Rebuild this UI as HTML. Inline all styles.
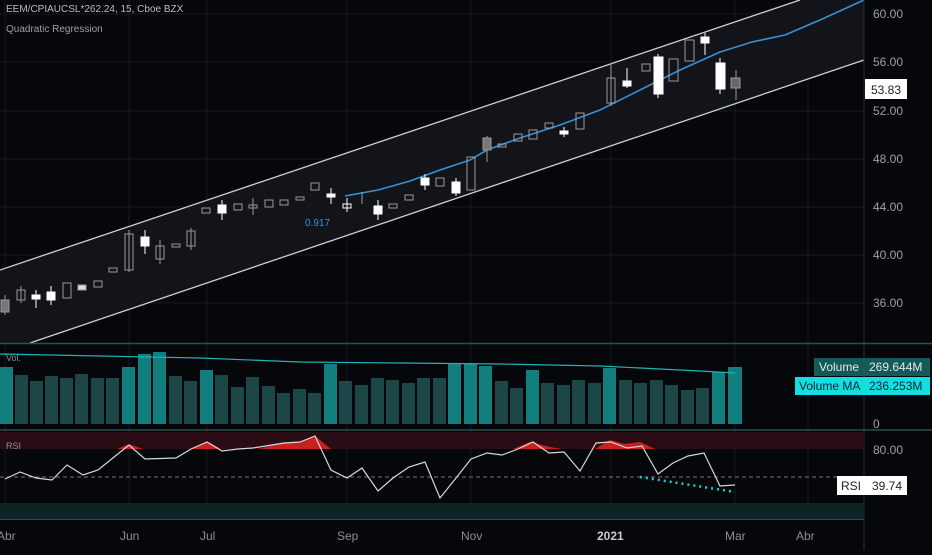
<!DOCTYPE html>
<html><head><style>
body{margin:0;background:#06070b;width:932px;height:550px;overflow:hidden;font-family:"Liberation Sans",sans-serif}
svg text{font-family:"Liberation Sans",sans-serif}
</style></head><body>
<svg width="932" height="550" xmlns="http://www.w3.org/2000/svg">
<rect width="932" height="550" fill="#06070b"/>
<g stroke="#141820" stroke-width="1">
<line x1="0" y1="14" x2="864" y2="14"/><line x1="0" y1="62" x2="864" y2="62"/><line x1="0" y1="111" x2="864" y2="111"/><line x1="0" y1="159" x2="864" y2="159"/><line x1="0" y1="207" x2="864" y2="207"/><line x1="0" y1="255" x2="864" y2="255"/><line x1="0" y1="303" x2="864" y2="303"/>
<line x1="5" y1="0" x2="5" y2="519"/><line x1="129" y1="0" x2="129" y2="519"/><line x1="207" y1="0" x2="207" y2="519"/><line x1="347" y1="0" x2="347" y2="519"/><line x1="471" y1="0" x2="471" y2="519"/><line x1="611" y1="0" x2="611" y2="519"/><line x1="735" y1="0" x2="735" y2="519"/><line x1="808" y1="0" x2="808" y2="519"/>
</g>
<polygon points="0,270 800,0 864,0 864,60 30,343 0,343" fill="#121419"/>
<line x1="0" y1="270" x2="800" y2="0" stroke="#d0d0d0" stroke-width="1.3"/>
<line x1="30" y1="343" x2="864" y2="60" stroke="#d0d0d0" stroke-width="1.3"/>
<polyline points="345,196 378,190 410,181 440,170 470,160 487,150 520,138 560,125 600,110 640,90 680,70 720,52 752,42 785,35 820,20 864,0" fill="none" stroke="#3a8fd6" stroke-width="1.6"/>
<text x="305" y="226" fill="#3a8fd6" font-size="10">0.917</text>
<g stroke="#9a9a9a" stroke-width="1">
<line x1="5" y1="295" x2="5" y2="315"/><rect x="1" y="300" width="8" height="12" fill="#777"/>
<line x1="21" y1="286" x2="21" y2="303"/><rect x="17" y="290" width="8" height="10" fill="none"/>
<line x1="36" y1="290" x2="36" y2="308" stroke="#fff"/><rect x="32" y="295" width="8" height="4" fill="#fff" stroke="#fff"/>
<line x1="51" y1="286" x2="51" y2="305" stroke="#fff"/><rect x="47" y="292" width="8" height="8" fill="#fff" stroke="#fff"/>
<rect x="63" y="283" width="8" height="15" fill="none"/>
<rect x="78" y="285" width="8" height="5" fill="#ddd"/>
<rect x="94" y="281" width="8" height="6" fill="none"/>
<rect x="109" y="268" width="8" height="4" fill="none"/>
<line x1="129" y1="230" x2="129" y2="272"/><rect x="125" y="234" width="8" height="36" fill="none"/>
<rect x="141" y="237" width="8" height="9" fill="#fff" stroke="#fff"/><line x1="145" y1="230" x2="145" y2="254" stroke="#fff"/>
<line x1="160" y1="240" x2="160" y2="264"/><rect x="156" y="246" width="8" height="13" fill="none"/>
<rect x="172" y="244" width="8" height="3" fill="none"/>
<line x1="191" y1="228" x2="191" y2="250"/><rect x="187" y="231" width="8" height="15" fill="none"/>
<rect x="202" y="208" width="8" height="5" fill="none"/>
<line x1="222" y1="200" x2="222" y2="220" stroke="#fff"/><rect x="218" y="205" width="8" height="8" fill="#fff" stroke="#fff"/>
<rect x="234" y="204" width="8" height="6" fill="none"/>
<rect x="249" y="205" width="8" height="3" fill="none"/><line x1="253" y1="198" x2="253" y2="215"/>
<rect x="265" y="200" width="8" height="7" fill="none"/>
<rect x="280" y="200" width="8" height="5" fill="none"/>
<rect x="296" y="197" width="8" height="3" fill="none"/>
<rect x="311" y="183" width="8" height="7" fill="none"/>
<line x1="331" y1="188" x2="331" y2="204" stroke="#fff"/><rect x="327" y="194" width="8" height="3" fill="#fff" stroke="#fff"/>
<line x1="347" y1="198" x2="347" y2="212" stroke="#fff"/><rect x="343" y="204" width="8" height="4" fill="none" stroke="#fff"/>
<line x1="362" y1="192" x2="362" y2="204"/>
<line x1="378" y1="200" x2="378" y2="220" stroke="#fff"/><rect x="374" y="206" width="8" height="8" fill="#fff" stroke="#fff"/>
<rect x="389" y="204" width="8" height="4" fill="none"/>
<rect x="405" y="195" width="8" height="5" fill="none"/>
<line x1="425" y1="174" x2="425" y2="190" stroke="#fff"/><rect x="421" y="178" width="8" height="7" fill="#fff" stroke="#fff"/>
<rect x="436" y="178" width="8" height="8" fill="none"/>
<line x1="456" y1="178" x2="456" y2="196" stroke="#fff"/><rect x="452" y="182" width="8" height="11" fill="#fff" stroke="#fff"/>
<rect x="467" y="157" width="8" height="33" fill="none"/>
<line x1="487" y1="136" x2="487" y2="162"/><rect x="483" y="138" width="8" height="12" fill="#777"/>
<rect x="498" y="144" width="8" height="3" fill="none"/>
<rect x="514" y="134" width="8" height="7" fill="none"/>
<rect x="529" y="130" width="8" height="9" fill="none"/>
<rect x="545" y="123" width="8" height="5" fill="none"/>
<line x1="564" y1="127" x2="564" y2="137" stroke="#fff"/><rect x="560" y="131" width="8" height="3" fill="#fff" stroke="#fff"/>
<rect x="576" y="113" width="8" height="16" fill="none"/>
<line x1="611" y1="63" x2="611" y2="106"/><rect x="607" y="78" width="8" height="25" fill="none"/>
<line x1="627" y1="68" x2="627" y2="88" stroke="#fff"/><rect x="623" y="81" width="8" height="5" fill="#fff" stroke="#fff"/>
<rect x="642" y="64" width="8" height="7" fill="none"/>
<line x1="658" y1="54" x2="658" y2="98" stroke="#fff"/><rect x="654" y="57" width="9" height="37" fill="#fff" stroke="#fff"/>
<rect x="669" y="59" width="9" height="22" fill="none"/>
<rect x="685" y="40" width="9" height="21" fill="none"/>
<line x1="705" y1="33" x2="705" y2="55" stroke="#fff"/><rect x="701" y="37" width="8" height="6" fill="#fff" stroke="#fff"/>
<line x1="720" y1="58" x2="720" y2="94" stroke="#fff"/><rect x="716" y="63" width="9" height="26" fill="#fff" stroke="#fff"/>
<line x1="736" y1="70" x2="736" y2="100"/><rect x="731" y="78" width="9" height="10" fill="#666"/>
</g>
<text x="6" y="12" fill="#b8bcc4" font-size="10">EEM/CPIAUCSL*262.24, 15, Cboe BZX</text>
<text x="6" y="32" fill="#9aa0a8" font-size="10">Quadratic Regression</text>
<line x1="864" y1="0" x2="864" y2="550" stroke="#2a2e36"/>
<g fill="#9aa0a8" font-size="12">
<text x="873" y="18">60.00</text><text x="873" y="66">56.00</text><text x="873" y="115">52.00</text><text x="873" y="163">48.00</text><text x="873" y="211">44.00</text><text x="873" y="259">40.00</text><text x="873" y="307">36.00</text>
</g>
<rect x="865" y="79" width="42" height="20" fill="#fff"/><text x="871" y="94" fill="#222" font-size="12">53.83</text>
<line x1="0" y1="343.5" x2="932" y2="343.5" stroke="#2c4e4e" stroke-width="1.5"/>
<line x1="0" y1="430" x2="932" y2="430" stroke="#2c4e4e" stroke-width="1.5"/>
<g fill="#1d4646">
<rect x="0" y="367" width="13" height="57" fill="#137e7e"/>
<rect x="15" y="375" width="13" height="49"/><rect x="30" y="381" width="13" height="43"/><rect x="45" y="376" width="13" height="48"/><rect x="60" y="378" width="13" height="46"/><rect x="75" y="374" width="13" height="50"/><rect x="91" y="378" width="13" height="46"/><rect x="106" y="378" width="13" height="46"/>
<rect x="122" y="367" width="13" height="57" fill="#137e7e"/><rect x="138" y="354" width="13" height="70" fill="#137e7e"/><rect x="153" y="352" width="13" height="72" fill="#137e7e"/>
<rect x="169" y="376" width="13" height="48"/><rect x="184" y="381" width="13" height="43"/>
<rect x="200" y="370" width="13" height="54" fill="#137e7e"/>
<rect x="215" y="375" width="13" height="49"/><rect x="231" y="387" width="13" height="37"/><rect x="246" y="377" width="13" height="47"/><rect x="262" y="386" width="13" height="38"/><rect x="277" y="393" width="13" height="31"/><rect x="293" y="389" width="13" height="35"/><rect x="308" y="393" width="13" height="31"/>
<rect x="324" y="364" width="13" height="60" fill="#137e7e"/>
<rect x="339" y="381" width="13" height="43"/><rect x="355" y="385" width="13" height="39"/><rect x="371" y="378" width="13" height="46"/><rect x="386" y="380" width="13" height="44"/><rect x="402" y="383" width="13" height="41"/><rect x="417" y="378" width="13" height="46"/><rect x="433" y="378" width="13" height="46"/>
<rect x="448" y="364" width="13" height="60" fill="#137e7e"/><rect x="464" y="364" width="13" height="60" fill="#137e7e"/><rect x="479" y="366" width="13" height="58" fill="#137e7e"/>
<rect x="495" y="381" width="13" height="43"/><rect x="510" y="388" width="13" height="36"/>
<rect x="526" y="370" width="13" height="54" fill="#137e7e"/>
<rect x="541" y="383" width="13" height="41"/><rect x="557" y="385" width="13" height="39"/><rect x="572" y="380" width="13" height="44"/><rect x="588" y="383" width="13" height="41"/>
<rect x="603" y="368" width="13" height="56" fill="#137e7e"/>
<rect x="619" y="380" width="13" height="44"/><rect x="634" y="383" width="13" height="41"/><rect x="650" y="380" width="13" height="44"/><rect x="665" y="385" width="13" height="39"/><rect x="681" y="390" width="13" height="34"/><rect x="696" y="388" width="13" height="36"/>
<rect x="712" y="372" width="13" height="52" fill="#137e7e"/><rect x="728" y="367" width="14" height="57" fill="#137e7e"/>
</g>
<polyline points="0,354 100,356 200,358 300,362 400,363 500,364 600,366 700,371 735,373" fill="none" stroke="#1fb5b5" stroke-width="1.2"/>
<text x="6" y="361" fill="#8a9096" font-size="9">Vol.</text>
<rect x="814" y="358" width="50" height="18" fill="#145a5a"/><text x="819" y="371" fill="#e6e6e6" font-size="12">Volume</text>
<rect x="864" y="358" width="66" height="18" fill="#145a5a"/><text x="869" y="371" fill="#e6e6e6" font-size="12">269.644M</text>
<rect x="795" y="377" width="69" height="18" fill="#11e0e0"/><text x="799" y="390" fill="#123" font-size="12">Volume MA</text>
<rect x="864" y="377" width="66" height="18" fill="#11e0e0"/><text x="869" y="390" fill="#123" font-size="12">236.253M</text>
<text x="873" y="428" fill="#9aa0a8" font-size="12">0</text>
<rect x="0" y="432" width="864" height="17" fill="#2a0c14"/>
<rect x="0" y="503" width="864" height="16" fill="#0c2424"/>
<line x1="0" y1="477" x2="864" y2="477" stroke="#777" stroke-dasharray="4,3"/>
<g fill="#c8201f">
<polygon points="117,449 129,444 143,449"/><polygon points="193,449 207,441 221,449"/><polygon points="258,449 282,443 300,442 315,436 331,449"/>
<polygon points="513,449 530,442 550,447 562,449"/><polygon points="595,449 610,440 625,444 640,442 655,449"/>
</g>
<polyline points="5,479 20,472 36,478 52,480 67,465 83,475 98,470 129,445 145,459 176,458 191,449 207,442 222,451 238,449 253,448 284,443 300,442 315,436 331,470 347,478 362,468 378,491 393,478 409,467 425,462 440,498 456,478 471,459 487,453 502,455 518,449 533,442 549,453 564,452 580,471 596,443 611,442 627,448 642,446 658,474 673,463 688,456 704,453 720,486 735,485" fill="none" stroke="#d8d8d8" stroke-width="1.2"/>
<line x1="640" y1="477" x2="735" y2="492" stroke="#1ccfd0" stroke-width="2.5" stroke-dasharray="2,4"/>
<text x="6" y="449" fill="#8a9096" font-size="9">RSI</text>
<text x="873" y="454" fill="#9aa0a8" font-size="12">80.00</text>
<rect x="837" y="476" width="27" height="19" fill="#fff"/><text x="841" y="490" fill="#222" font-size="12">RSI</text>
<rect x="864" y="476" width="43" height="19" fill="#fff"/><text x="872" y="490" fill="#222" font-size="12">39.74</text>
<line x1="0" y1="519.5" x2="864" y2="519.5" stroke="#2c4e4e"/>
<g fill="#8a9096" font-size="12">
<text x="-3" y="540">Abr</text><text x="120" y="540">Jun</text><text x="200" y="540">Jul</text><text x="337" y="540">Sep</text><text x="461" y="540">Nov</text><text x="597" y="540" font-weight="bold" fill="#c8ccd2">2021</text><text x="725" y="540">Mar</text><text x="796" y="540">Abr</text>
</g>
</svg>
</body></html>
